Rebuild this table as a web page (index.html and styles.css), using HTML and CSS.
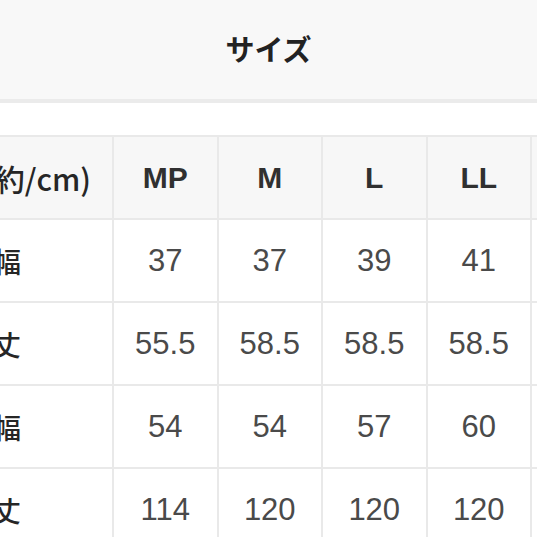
FILE: index.html
```html
<!DOCTYPE html>
<html lang="ja">
<head>
<meta charset="utf-8">
<link rel="stylesheet" href="styles.css">
</head>
<body>
<div class="page">
  <header class="title-bar">
    <h1 class="title">サイズ</h1>
  </header>
  <div class="gap"></div>
  <table class="size-table">
    <thead>
      <tr class="head-row">
        <th class="label">サイズ(約/cm)</th>
        <th>MP</th>
        <th>M</th>
        <th>L</th>
        <th>LL</th>
        <th>3L</th>
      </tr>
    </thead>
    <tbody>
      <tr>
        <td class="label">肩幅</td>
        <td>37</td><td>37</td><td>39</td><td>41</td><td>43</td>
      </tr>
      <tr>
        <td class="label">袖丈</td>
        <td>55.5</td><td>58.5</td><td>58.5</td><td>58.5</td><td>58.5</td>
      </tr>
      <tr>
        <td class="label">身幅</td>
        <td>54</td><td>54</td><td>57</td><td>60</td><td>63</td>
      </tr>
      <tr>
        <td class="label">着丈</td>
        <td>114</td><td>120</td><td>120</td><td>120</td><td>120</td>
      </tr>
    </tbody>
  </table>
</div>
</body>
</html>
```

FILE: styles.css
```css
html, body {
  margin: 0;
  padding: 0;
  background: #ffffff;
}

body {
  width: 537px;
  height: 537px;
  overflow: hidden;
  font-family: "Liberation Sans", "Noto Sans CJK JP", sans-serif;
}

.page {
  display: flex;
  flex-direction: column;
}

.title-bar {
  height: 99px;
  background: #f8f8f8;
  border-bottom: 4px solid #ebebeb;
  display: flex;
  align-items: center;
  justify-content: center;
}

.title {
  margin: 0 0 4px 0;
  font-family: "Noto Sans CJK JP", sans-serif;
  font-size: 29px;
  font-weight: 700;
  color: #222222;
  padding-left: 0;
}

.gap {
  height: 32px;
}

.size-table {
  border-collapse: collapse;
  table-layout: fixed;
  margin-left: -128px;
  width: 762.5px;
}

.size-table th,
.size-table td {
  width: 102.5px;
  height: 81px;
  padding: 0;
  border: 2px solid #e9e9e9;
  text-align: center;
  vertical-align: middle;
  font-size: 30px;
  line-height: 1;
}

.size-table th {
  background: #f7f7f7;
  color: #303030;
  font-weight: 700;
}

.size-table td {
  color: #4a4a4a;
  font-size: 31px;
  font-weight: 400;
}

.size-table .label {
  width: 238px;
  font-family: "Noto Sans CJK JP", sans-serif;
  font-size: 28px;
  color: #262626;
  font-weight: 500;
}

.size-table th.label {
  font-size: 30px;
  font-weight: 500;
}
```
